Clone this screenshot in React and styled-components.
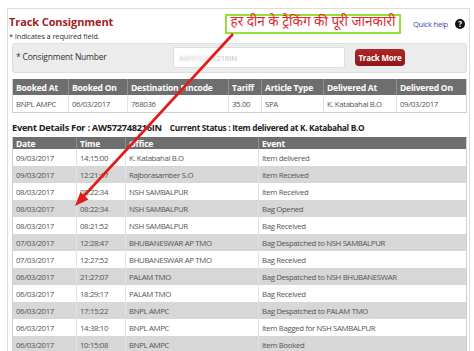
import React from 'react';
import styled, { createGlobalStyle } from 'styled-components';

const GlobalStyle = createGlobalStyle`
  html, body {
    margin: 0;
    padding: 0;
    background: #fff;
  }
  body {
    font-family: 'Open Sans', 'Noto Sans', sans-serif;
    color: #333;
    overflow: hidden;
  }
`;

const Page = styled.div`
  position: relative;
  width: 474px;
  height: 351px;
  overflow: hidden;
  padding-top: 8px;
  box-sizing: border-box;
`;

const Panel = styled.div`
  margin-left: 7px;
  width: 463px;
  height: 343px;
  box-sizing: border-box;
  border: 1px solid #dcdcdc;
  border-bottom: none;
  padding: 0 2px 0 4px;
`;

const TitleRow = styled.div`
  display: flex;
  align-items: center;
  justify-content: space-between;
  margin-left: -3px;
  padding-top: 5px;
  height: 16px;
`;

const Title = styled.h1`
  margin: 0;
  font-size: 11px;
  line-height: 16px;
  font-weight: 700;
  color: #a3201f;
  letter-spacing: -0.1px;
`;

const Help = styled.div`
  display: flex;
  align-items: center;
  gap: 7px;
  margin-right: 2px;
  margin-top: 4px;
  font-size: 7.5px;
  color: #3b3bbb;
  letter-spacing: -0.2px;
`;

const HelpIcon = styled.span`
  display: inline-flex;
  align-items: center;
  justify-content: center;
  width: 10px;
  height: 10px;
  border-radius: 50%;
  background: #111;
  color: #fff;
  font-size: 8px;
  font-weight: 700;
  line-height: 1;
`;

const Note = styled.div`
  margin: 1px 0 0 -3px;
  font-size: 7.5px;
  line-height: 10px;
  color: #333;
  letter-spacing: -0.15px;
`;

const FormBox = styled.div`
  display: flex;
  align-items: center;
  margin-top: 2px;
  height: 30px;
  box-sizing: border-box;
  border: 1px solid #dedede;
  border-radius: 3px;
  background: #ececec;
  padding-left: 3px;
`;

const Label = styled.div`
  width: 157px;
  font-size: 8.5px;
  color: #333;
  letter-spacing: -0.2px;
  margin-top: -4px;
`;

const Input = styled.div`
  width: 172px;
  height: 21px;
  box-sizing: border-box;
  margin-top: -1px;
  background: #fff;
  border: 1px solid #dddddd;
  border-radius: 2px;
  display: flex;
  align-items: center;
  padding-left: 5px;
  font-size: 7.5px;
  color: #bcbcbc;
`;

const Blur = styled.span`
  filter: blur(1.3px);
`;

const Button = styled.button`
  margin: -2px 0 0 10px;
  width: 50px;
  height: 17px;
  padding: 0;
  border: none;
  border-radius: 4px;
  background: linear-gradient(#b12626, #8e1616);
  color: #fff;
  font-family: 'Open Sans', sans-serif;
  font-size: 8px;
  font-weight: 700;
  letter-spacing: -0.2px;
`;

const Table = styled.div`
  margin-top: ${(p) => p.$top}px;
  width: 455px;
  box-sizing: border-box;
  border: 1px solid #cfcfcf;
  border-top: none;
`;

const Row = styled.div`
  display: grid;
  grid-template-columns: ${(p) => p.$cols};
  height: ${(p) => p.$h}px;
  background: ${(p) => (p.$head ? '#6e6e6e' : p.$alt ? '#d7d7d7' : '#fff')};
  color: ${(p) => (p.$head ? '#fff' : '#555')};
  font-weight: ${(p) => (p.$head ? 700 : 400)};
  font-size: ${(p) => (p.$head ? 8.5 : 7.8)}px;
  letter-spacing: ${(p) => (p.$head ? -0.2 : -0.35)}px;
`;

const Cell = styled.div`
  display: flex;
  align-items: center;
  padding-left: 3px;
  white-space: nowrap;
  overflow: hidden;
  border-right: 1px solid ${(p) => (p.$head ? '#8f8f8f' : '#e2e2e2')};
  &:last-child {
    border-right: none;
  }
`;

const EventTitle = styled.div`
  display: flex;
  align-items: baseline;
  gap: 8px;
  margin-top: 8px;
  font-size: 9.3px;
  line-height: 14px;
  font-weight: 700;
  color: #222;
  letter-spacing: -0.3px;
  white-space: nowrap;
`;

const Status = styled.span`
  font-size: 8.3px;
`;

const Annotation = styled.div`
  position: absolute;
  left: 225px;
  top: 14px;
  width: 176px;
  height: 20px;
  box-sizing: border-box;
  border: 2px solid #93e23c;
  background: #fff;
  display: flex;
  align-items: center;
  justify-content: center;
  font-family: 'Noto Sans Devanagari', 'Lohit Devanagari', 'FreeSans', 'Noto Sans', sans-serif;
  font-size: 13.5px;
  line-height: 1;
  color: #e3262a;
  white-space: nowrap;
`;

const Arrow = styled.svg`
  position: absolute;
  left: 0;
  top: 0;
  pointer-events: none;
`;

const bookingCols = '56px 59px 101px 33px 62px 73px 69px';
const eventCols = '64px 49px 133px 207px';

const bookingHead = ['Booked At', 'Booked On', 'Destination Pincode', 'Tariff', 'Article Type', 'Delivered At', 'Delivered On'];
const bookingRow = ['BNPL AMPC', '06/03/2017', '768036', '35.00', 'SPA', 'K. Katabahal B.O', '09/03/2017'];

const events = [
  ['09/03/2017', '14:15:00', 'K. Katabahal B.O', 'Item delivered'],
  ['09/03/2017', '12:21:47', 'Rajborasamber S.O', 'Item Received'],
  ['08/03/2017', '08:22:34', 'NSH SAMBALPUR', 'Item Received'],
  ['08/03/2017', '08:22:34', 'NSH SAMBALPUR', 'Bag Opened'],
  ['08/03/2017', '08:21:52', 'NSH SAMBALPUR', 'Bag Received'],
  ['07/03/2017', '12:28:47', 'BHUBANESWAR AP TMO', 'Bag Despatched to NSH SAMBALPUR'],
  ['07/03/2017', '12:27:52', 'BHUBANESWAR AP TMO', 'Bag Received'],
  ['06/03/2017', '21:27:07', 'PALAM TMO', 'Bag Despatched to NSH BHUBANESWAR'],
  ['06/03/2017', '18:29:17', 'PALAM TMO', 'Bag Received'],
  ['06/03/2017', '17:15:22', 'BNPL AMPC', 'Bag Despatched to PALAM TMO'],
  ['06/03/2017', '14:38:10', 'BNPL AMPC', 'Item Bagged for NSH SAMBALPUR'],
  ['06/03/2017', '10:15:08', 'BNPL AMPC', 'Item Booked'],
];

const App = () => {
  return (
    <>
      <GlobalStyle />
      <Page>
        <Panel>
          <TitleRow>
            <Title>Track Consignment</Title>
            <Help>
              Quick help
              <HelpIcon>?</HelpIcon>
            </Help>
          </TitleRow>
          <Note>* Indicates a required field.</Note>

          <FormBox>
            <Label>* Consignment Number</Label>
            <Input>
              <Blur>AW572748</Blur>
              216IN
            </Input>
            <Button>Track More</Button>
          </FormBox>

          <Table $top={6}>
            <Row $cols={bookingCols} $h={16} $head>
              {bookingHead.map((h) => (
                <Cell key={h} $head>{h}</Cell>
              ))}
            </Row>
            <Row $cols={bookingCols} $h={17}>
              {bookingRow.map((v, i) => (
                <Cell key={i}>{v}</Cell>
              ))}
            </Row>
          </Table>

          <EventTitle>
            <span>Event Details For : AW572748216IN</span>
            <Status>Current Status : Item delivered at K. Katabahal B.O</Status>
          </EventTitle>

          <Table $top={2}>
            <Row $cols={eventCols} $h={12} $head>
              {['Date', 'Time', 'Office', 'Event'].map((h) => (
                <Cell key={h} $head>{h}</Cell>
              ))}
            </Row>
            {events.map((ev, i) => (
              <Row key={i} $cols={eventCols} $h={17} $alt={i % 2 === 1}>
                {ev.map((v, j) => (
                  <Cell key={j}>{v}</Cell>
                ))}
              </Row>
            ))}
          </Table>
        </Panel>

        <Annotation>हर दीन के ट्रैकिंग की पूरी जानकारी</Annotation>

        <Arrow width="474" height="351" viewBox="0 0 474 351">
          <line x1="233" y1="34" x2="83" y2="197" stroke="#e21b1b" strokeWidth="2.6" />
          <polygon points="75,206 88.5,199.5 80.5,192" fill="#e21b1b" />
        </Arrow>
      </Page>
    </>
  );
};

export default App;
